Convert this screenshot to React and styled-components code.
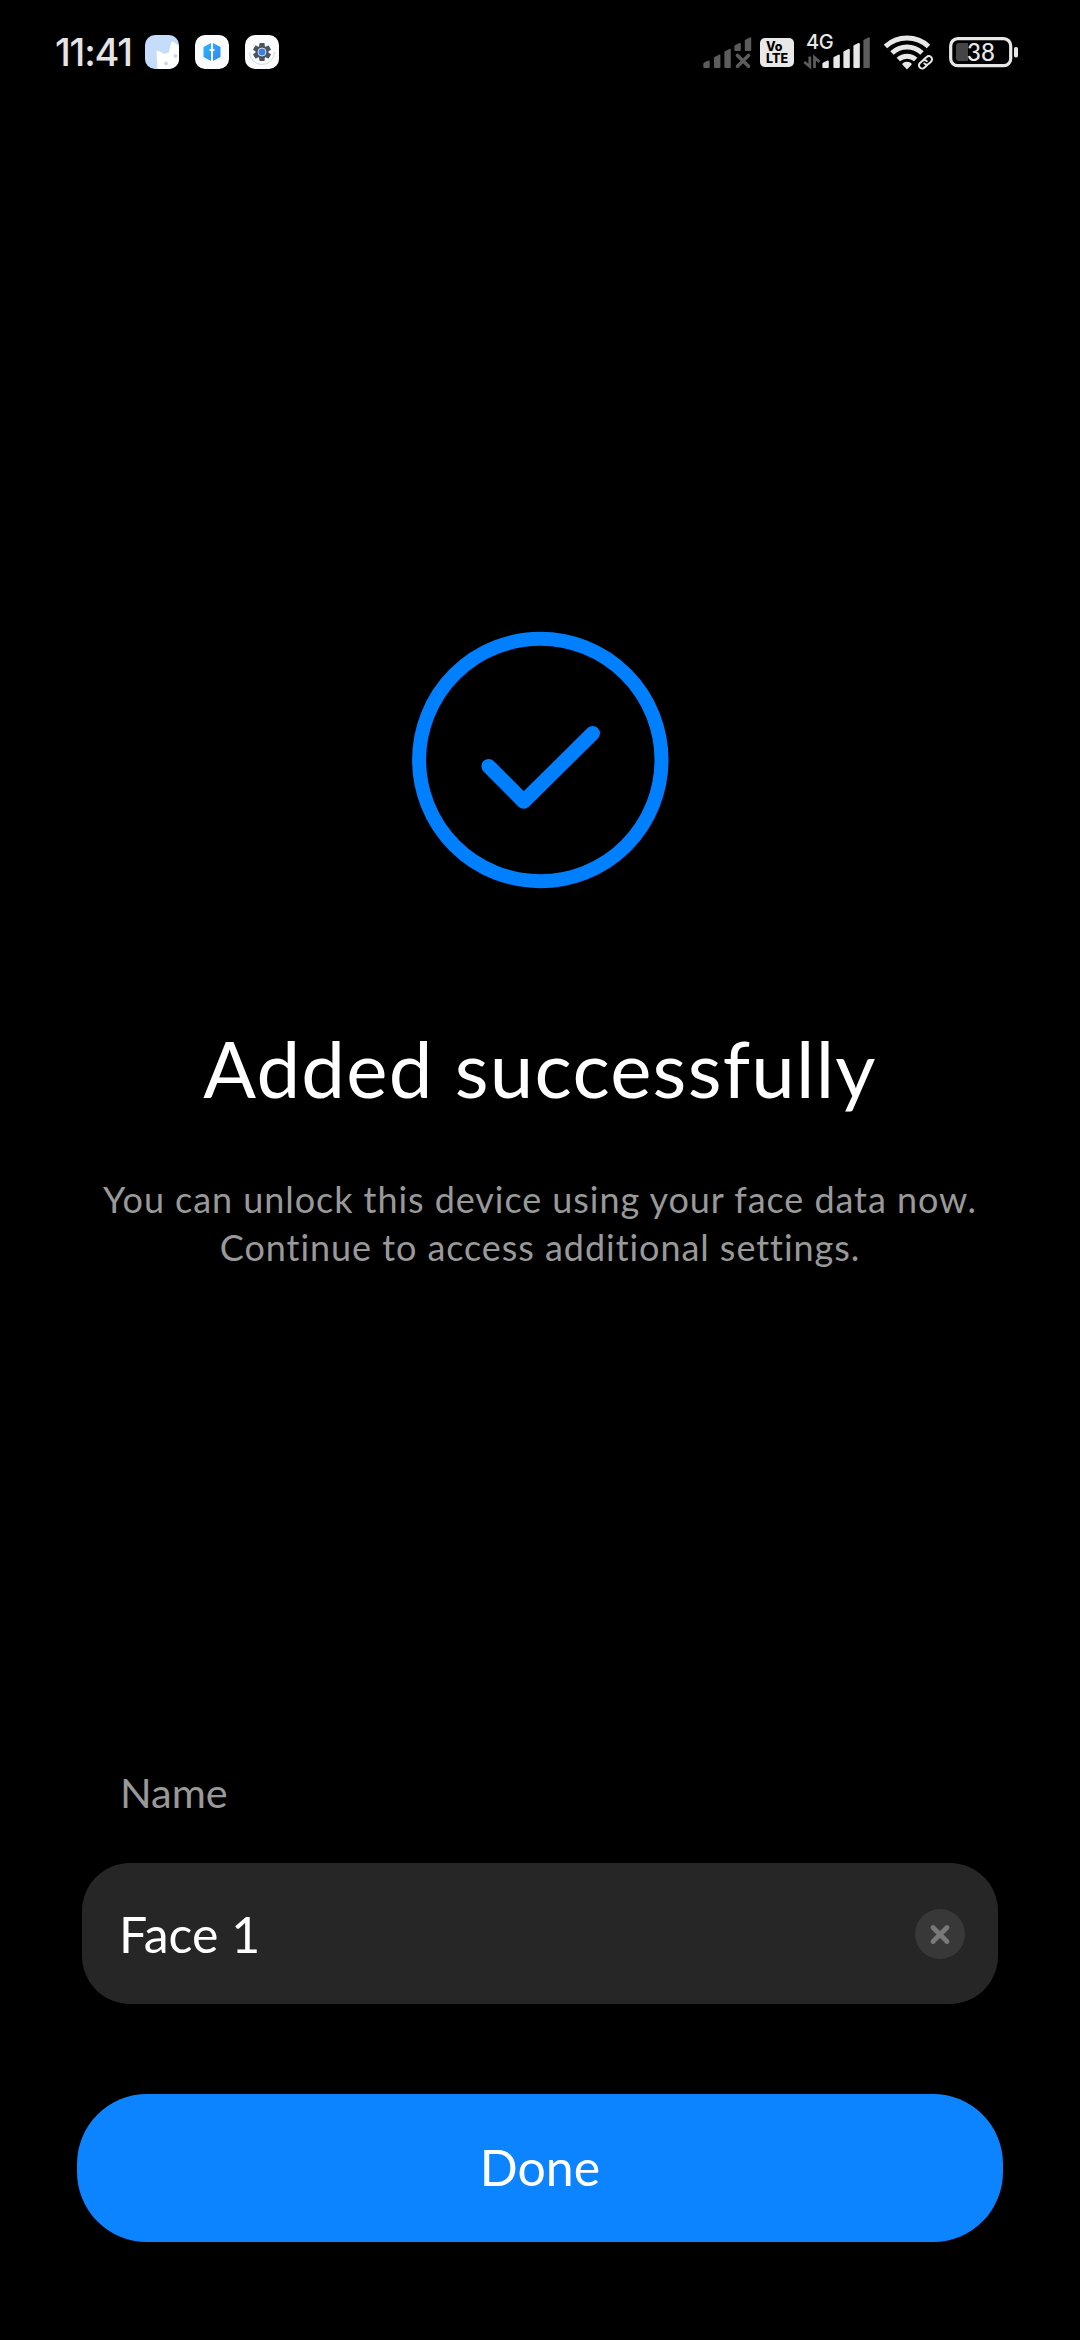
import React from "react";
import styled, { createGlobalStyle } from "styled-components";

const GlobalStyle = createGlobalStyle`
  * { box-sizing: border-box; }
  body { margin: 0; background: #000; }
`;

const Screen = styled.main`
  display: flex;
  flex-direction: column;
  width: 1080px;
  height: 2340px;
  background: #000;
  color: #fff;
  font-family: Lato, "Noto Sans", sans-serif;
`;

const StatusBar = styled.header`
  display: flex;
  justify-content: space-between;
  height: 104px;
  padding: 34px 62px 0 55px;
`;

const StatusGroup = styled.div`
  display: flex;
  align-items: flex-start;
  height: 36px;
`;

const Clock = styled.time`
  width: 90px;
  font: 500 38px/36px Inter, sans-serif;
  letter-spacing: -1.2px;
  color: #e4e4e4;
`;

const Glyph = styled.svg`
  display: block;
  flex: none;
  width: ${(p) => p.$w}px;
  height: 36px;
  margin-left: ${(p) => p.$gap || 0}px;
`;

const VolteBadge = styled.div`
  display: flex;
  flex-direction: column;
  justify-content: center;
  width: 34px;
  height: 29px;
  margin: 4px 0 0 8px;
  padding-left: 6px;
  border-radius: 5px;
  background: #e8e8e8;
  color: #000;
  font: 800 12.5px/12px Inter, sans-serif;
`;

const Mobile = styled.div`
  display: flex;
  position: relative;
  margin-left: 9px;
`;

const NetworkType = styled.span`
  position: absolute;
  left: 3px;
  top: -1px;
  font: 500 20px/18px Inter, sans-serif;
  letter-spacing: -0.5px;
  color: #e8e8e8;
`;

const Battery = styled.div`
  display: flex;
  position: relative;
  margin-left: 15px;
`;

const BatteryLevel = styled.span`
  position: absolute;
  left: 18px;
  top: 4px;
  width: 28px;
  text-align: center;
  font: 500 24px/28px Lato, sans-serif;
  color: #e8e8e8;
`;

const Result = styled.section`
  display: flex;
  flex-direction: column;
  align-items: center;
  height: 1660px;
  padding-top: 526px;
`;

const SuccessMark = styled.svg`
  display: block;
  width: 260px;
  height: 260px;
`;

const Title = styled.h1`
  margin: 128px 0 0;
  font-size: 78px;
  font-weight: 400;
  line-height: 100px;
  letter-spacing: ${(p) => p.$track}px;
`;

const Description = styled.p`
  margin: 57px 0 0;
  font-size: 36px;
  line-height: 48px;
  text-align: center;
  color: #999;
`;

const Line = styled.span`
  display: block;
  letter-spacing: ${(p) => p.$track}px;
`;

const Form = styled.section`
  display: flex;
  flex-direction: column;
  padding: 0 77px;
`;

const Label = styled.label`
  padding-left: 43px;
  font-size: 41.5px;
  line-height: 56px;
  color: #999;
`;

const Field = styled.div`
  display: flex;
  align-items: center;
  justify-content: space-between;
  height: 141px;
  margin: 43px 5px 0;
  padding: 0 33px 0 37px;
  border-radius: 48px;
  background: #262626;
`;

const Value = styled.span`
  font-size: 50px;
  line-height: 60px;
`;

const ClearButton = styled.button`
  display: block;
  width: 50px;
  height: 50px;
  padding: 0;
  border: 0;
  border-radius: 50%;
  background: #383838;
`;

const DoneButton = styled.button`
  height: 148px;
  margin-top: 90px;
  padding: 0 0 3px;
  border: 0;
  border-radius: 70px;
  background: #0d84ff;
  color: #fff;
  font: 400 50px/60px Lato, "Noto Sans", sans-serif;
`;

const CatIcon = () => (
  <Glyph $w={34} viewBox="0 0 34 36">
    <clipPath id="cat"><rect y="1" width="34" height="34" rx="10" /></clipPath>
    <g clipPath="url(#cat)">
      <rect y="1" width="34" height="34" fill="#c6dcfb" />
      <path d="M12.500 36L11.500 17.500Q12 16 13.500 17L19 20L24 18.500L26 9Q27 6.500 28.500 8L34 12V36Z" fill="#fff" />
      <circle cx="21" cy="29.500" r="2" fill="#ccd9f0" />
      <circle cx="30.500" cy="22" r="2" fill="#ccd9f0" />
    </g>
  </Glyph>
);

const HexIcon = () => (
  <Glyph $w={34} $gap={16} viewBox="0 0 34 36">
    <defs>
      <linearGradient id="hex" x1="0" x2="1" y1="0" y2="1">
        <stop offset="0" stopColor="#27b8fb" />
        <stop offset="1" stopColor="#3a82f2" />
      </linearGradient>
    </defs>
    <rect y="1" width="34" height="34" rx="10" fill="#fafbfc" />
    <path d="M17 8.500L25.500 13V23L17 27.500L8.500 23V13Z" fill="url(#hex)" />
    <path d="M17 7V28.500" stroke="#fafbfc" strokeWidth="2" />
    <path d="M17 12Q17.500 15.500 20.500 16Q17.500 16.500 17 20Q16.500 16.500 13.500 16Q16.500 15.500 17 12Z" fill="#fff" />
  </Glyph>
);

const GearIcon = () => (
  <Glyph $w={34} $gap={16} viewBox="0 0 34 36">
    <rect y="1" width="34" height="34" rx="10" fill="#fafbfc" />
    <path d="M4.500 18A12.500 12.500 0 0 0 29.500 18" fill="none" stroke="#d7d9dc" strokeWidth="1" />
    <circle cx="17" cy="18" r="6.500" fill="#49545e" />
    {[0, 60, 120].map((angle) => (
      <rect key={angle} x="14.300" y="9" width="5.400" height="18" rx="1" fill="#49545e" transform={`rotate(${angle} 17 18)`} />
    ))}
    <circle cx="17" cy="18" r="4" fill="#3f7fe0" stroke="#c9dcf5" strokeWidth="1" />
  </Glyph>
);

const Bar = ({ x, top, bottom = 34, color }) => (
  <path d={`M${x} ${top + 3.5}Q${x} ${top + 2.6} ${x + 1} ${top + 2.1}L${x + 5} ${top + 0.1}Q${x + 6.400} ${top - 0.300} ${x + 6.400} ${top + 1}V${bottom - 1}Q${x + 6.400} ${bottom} ${x + 5.400} ${bottom}H${x + 1}Q${x} ${bottom} ${x} ${bottom - 1}Z`} fill={color} />
);

const NoSignalIcon = () => (
  <Glyph $w={49} viewBox="0 0 49 36">
    <Bar x={0.300} top={26.400} color="#5c5c5c" />
    <Bar x={11} top={20.600} color="#5c5c5c" />
    <Bar x={21.400} top={14.800} color="#5c5c5c" />
    <Bar x={31.400} top={9} bottom={17} color="#5c5c5c" />
    <Bar x={41.800} top={3.300} bottom={17} color="#5c5c5c" />
    <path d="M34.500 21.500L45.500 32.200M45.500 21.500L34.500 32.200" stroke="#5c5c5c" strokeWidth="3.600" strokeLinecap="round" />
  </Glyph>
);

const SignalIcon = () => (
  <Glyph $w={67} viewBox="0 0 67 36">
    <path d="M6.800 22.500V32.500L1.300 28M11.500 34V23.500L16.500 28" fill="none" stroke="#5c5c5c" strokeWidth="2.800" />
    <Bar x={19.400} top={26.400} color="#e8e8e8" />
    <Bar x={30.400} top={20.600} color="#e8e8e8" />
    <Bar x={40.400} top={14.800} color="#e8e8e8" />
    <Bar x={50.400} top={9} color="#e8e8e8" />
    <Bar x={60.400} top={3.300} color="#5c5c5c" />
  </Glyph>
);

const WifiIcon = () => (
  <Glyph $w={50} $gap={14} viewBox="0 0 50 36">
    <g fill="none" stroke="#e8e8e8" strokeWidth="5">
      <path d="M1.500 12.500C13.500 1.300 32.500 1.300 44.500 12.500" />
      <path d="M8 19C16.500 11 29.500 11 38 19" />
      <path d="M14.300 25.500C19.300 21 26.700 21 31.700 25.500" />
    </g>
    <path d="M23 35.500L18.700 31C18 30.200 18.300 29.500 19 29C21.400 27.200 24.600 27.200 27 29C27.700 29.500 28 30.200 27.300 31Z" fill="#e8e8e8" />
    <g transform="translate(41.500 28.300) rotate(-42)" fill="none">
      <rect x="-10" y="-5.500" width="20" height="11" rx="5.500" fill="#000" />
      <path d="M-.5 3.200H-4.500A3.200 3.200 0 0 1-4.500-3.200H-1.500A3.200 3.200 0 0 1 1.700 0M.5-3.200H4.500A3.200 3.200 0 0 1 4.500 3.200H1.500A3.200 3.200 0 0 1-1.700 0" stroke="#e8e8e8" strokeWidth="2" strokeLinecap="round" />
    </g>
  </Glyph>
);

const BatteryIcon = () => (
  <Glyph $w={69} viewBox="0 0 69 36">
    <rect x="1.700" y="4.700" width="60" height="27" rx="7" fill="none" stroke="#e8e8e8" strokeWidth="3.200" />
    <path d="M10 9H19V27H10Q7 27 7 24V12Q7 9 10 9Z" fill="#454545" />
    <rect x="65" y="13" width="4" height="10.500" rx="1.700" fill="#e8e8e8" />
  </Glyph>
);

export default function App() {
  return (
    <Screen>
      <GlobalStyle />
      <StatusBar>
        <StatusGroup>
          <Clock>11:41</Clock>
          <CatIcon />
          <HexIcon />
          <GearIcon />
        </StatusGroup>
        <StatusGroup>
          <NoSignalIcon />
          <VolteBadge>
            <span>Vo</span>
            <span>LTE</span>
          </VolteBadge>
          <Mobile>
            <SignalIcon />
            <NetworkType>4G</NetworkType>
          </Mobile>
          <WifiIcon />
          <Battery>
            <BatteryIcon />
            <BatteryLevel>38</BatteryLevel>
          </Battery>
        </StatusGroup>
      </StatusBar>
      <Result>
        <SuccessMark viewBox="0 0 260 260" fill="none" stroke="#007fff">
          <circle cx="130.300" cy="130" r="121.200" strokeWidth="14" />
          <path d="M78.700 136.300L113.700 171.500L182.700 103.300" strokeWidth="14.600" strokeLinecap="round" strokeLinejoin="round" />
        </SuccessMark>
        <Title $track={1.25}>Added successfully</Title>
        <Description>
          <Line $track={0.94}>You can unlock this device using your face data now.</Line>
          <Line $track={0.94}>Continue to access additional settings.</Line>
        </Description>
      </Result>
      <Form>
        <Label>Name</Label>
        <Field>
          <Value>Face 1</Value>
          <ClearButton aria-label="Clear">
            <svg width="50" height="50" viewBox="0 0 50 50">
              <path d="M18 18.500L32 32.500M32 18.500L18 32.500" stroke="#787878" strokeWidth="4.800" strokeLinecap="round" />
            </svg>
          </ClearButton>
        </Field>
        <DoneButton>Done</DoneButton>
      </Form>
    </Screen>
  );
}
